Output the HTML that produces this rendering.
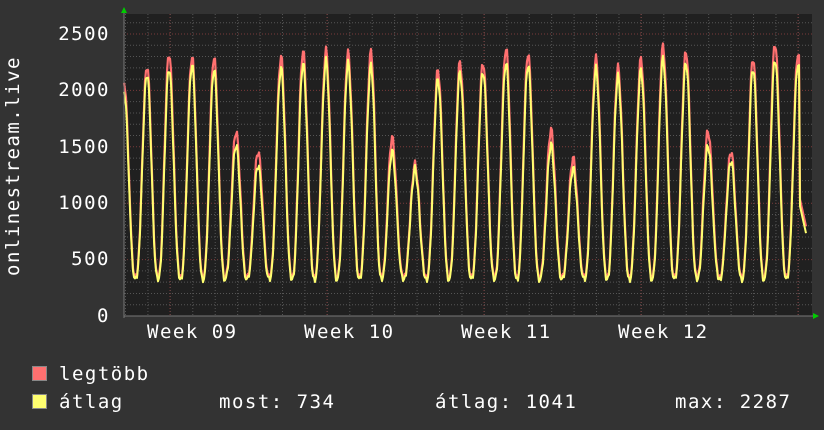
<!DOCTYPE html>
<html><head><meta charset="utf-8"><style>
html,body{margin:0;padding:0;background:#333;}
body{width:824px;height:430px;overflow:hidden;position:relative;font-family:"DejaVu Sans Mono","Liberation Mono",monospace;color:#fff;}
.t{position:absolute;font-size:19px;line-height:20px;white-space:pre;letter-spacing:1.5px;}
.r{text-align:right;width:80px;}
.sq{position:absolute;width:13px;height:13px;border:1px solid #888;}
</style></head><body>
<svg id="g" width="824" height="430" style="position:absolute;left:0;top:0">
<rect x="124" y="14" width="688" height="302" fill="#202020"/>
<g id="grid"></g>
<polyline id="mx" fill="none" stroke="#ff7070" stroke-width="2.2" stroke-linejoin="round"/>
<polyline id="av" fill="none" stroke="#ffff70" stroke-width="2" stroke-linejoin="round"/>
<line x1="124" y1="316" x2="814" y2="316" stroke="#777"/>
<line x1="124" y1="12" x2="124" y2="318" stroke="#777"/>
<polygon points="121,13 127,13 124,7" fill="#0c0"/>
<polygon points="813,313 813,319 819,316" fill="#0c0"/>
</svg>
<div class="t r" style="left:30px;top:24px">2500</div>
<div class="t r" style="left:30px;top:80px">2000</div>
<div class="t r" style="left:30px;top:137px">1500</div>
<div class="t r" style="left:30px;top:193px">1000</div>
<div class="t r" style="left:30px;top:249px">500</div>
<div class="t r" style="left:30px;top:306px">0</div>
<div class="t" style="left:147px;top:322px">Week 09</div>
<div class="t" style="left:304px;top:322px">Week 10</div>
<div class="t" style="left:461px;top:322px">Week 11</div>
<div class="t" style="left:618px;top:322px">Week 12</div>
<div class="t" style="left:3px;top:276px;transform-origin:0 0;transform:rotate(-90deg);">onlinestream.live</div>
<div class="sq" style="left:32px;top:366px;background:#ff7070"></div>
<div class="t" style="left:59px;top:364px">legtöbb</div>
<div class="sq" style="left:32px;top:394px;background:#ffff70"></div>
<div class="t" style="left:59px;top:392px">átlag</div>
<div class="t" style="left:219px;top:392px">most: 734</div>
<div class="t" style="left:435px;top:392px">átlag: 1041</div>
<div class="t" style="left:675px;top:392px">max: 2287</div>
<script>
var g=document.getElementById('grid'),s='';
function Y(v){return 316-v*0.1128;}
for(var x=125.5;x<812;x+=22.43){s+='<line x1="'+x+'" y1="14" x2="'+x+'" y2="316" stroke="#555" stroke-dasharray="1,2"/>';}
for(var v=100;v<=2600;v+=100){var y=Y(v);if(y<14)break;s+='<line x1="124" y1="'+y+'" x2="812" y2="'+y+'" stroke="'+(v%500?'#555':'#7a3a3a')+'" stroke-dasharray="1,2"/>';}
[170,327,484,641,798].forEach(function(x){s+='<line x1="'+x+'" y1="14" x2="'+x+'" y2="316" stroke="#7a3a3a" stroke-dasharray="1,2"/>';});
g.innerHTML=s;
var P=[[124,2080,2000],[147,2220,2150],[169,2330,2200],[192,2300,2230],[214,2300,2190],[236,1640,1520],[258,1460,1340],[281,2300,2200],[303,2350,2240],[326,2350,2260],[348,2330,2240],[371,2340,2220],[392,1580,1460],[415,1340,1300],[438,2180,2100],[460,2250,2160],[483,2250,2170],[506,2380,2250],[528,2330,2230],[551,1650,1520],[573,1400,1310],[596,2280,2190],[618,2200,2120],[641,2280,2180],[663,2390,2280],[686,2350,2250],[708,1640,1510],[731,1460,1380],[753,2290,2200],[775,2420,2280],[798,2330,2240],[820,2300,2200]];
var mx=[],av=[];
for(var x=124;x<=806;x+=1){
 var i=0;while(i<P.length-2&&P[i+1][0]<=x)i++;
 var a=P[i],b=P[i+1],t=(x-a[0])/(b[0]-a[0]);
 var ph=t*2*Math.PI;var f=Math.pow((1+Math.cos(ph))/2,1.3);
 var n=Math.sin(x*1.7)*40*f;
 var pk=t<0.5?a:b;var mn=320+((x*37)%7)*8;
 var vr=mn+(pk[1]-mn)*f+n, va=mn-20+(pk[2]-mn+20)*f+n;
 if(x>=800){va=734+(806-x)*40;vr=va+60;}
 mx.push(x+','+Y(vr).toFixed(1));av.push(x+','+Y(va).toFixed(1));
}
document.getElementById('mx').setAttribute('points',mx.join(' '));
document.getElementById('av').setAttribute('points',av.join(' '));
</script>
</body></html>
